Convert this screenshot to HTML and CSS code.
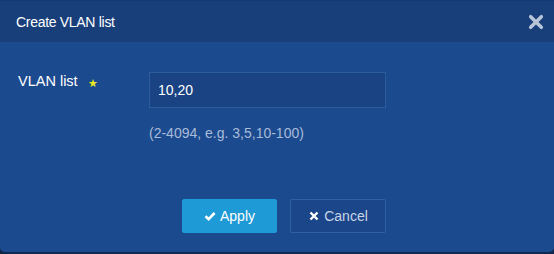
FILE: index.html
```html
<!DOCTYPE html>
<html>
  <head>
    <meta charset="utf-8">
    <title>Create VLAN list</title>
    <link rel="stylesheet" href="styles.css">
  </head>
  <body>
    <div class="modal">
      <div class="modal-header">
        <h4 class="modal-title">Create VLAN list</h4>
        <span class="close" title="Close">
          <svg viewBox="0 0 12 12">
            <path d="M2,2 L10,10 M10,2 L2,10" />
          </svg>
        </span>
      </div>

      <div class="modal-body">
        <div class="field">
          <label class="field-label">VLAN list <span class="required">&#9733;</span></label>
          <div class="field-control">
            <input class="input" type="text" value="10,20">
            <p class="hint">(2-4094, e.g. 3,5,10-100)</p>
          </div>
        </div>
      </div>

      <div class="modal-footer">
        <button class="btn btn--primary">
          <svg class="btn-icon" viewBox="0 0 12 12">
            <path d="M1.5,6.2 L4.6,9.2 L10.6,3" />
          </svg>
          Apply
        </button>
        <button class="btn btn--default">
          <svg class="btn-icon btn-icon--x" viewBox="0 0 12 12">
            <path d="M2.5,2.5 L9.5,9.5 M9.5,2.5 L2.5,9.5" />
          </svg>
          Cancel
        </button>
      </div>
    </div>
  </body>
</html>
```

FILE: styles.css
```css
body {
  margin: 0;
  font-family: 'Liberation Sans', Arial, sans-serif;
  color: #fff;
  background: #0f2547;
}
.modal {
  width: 554px;
  height: 254px;
  box-sizing: border-box;
  display: flex;
  flex-direction: column;
  background-color: #1c4a8e;
  border-bottom: 2px solid #0f2a52;
  border-radius: 0 0 6px 6px;
  overflow: hidden;
}
.modal-header {
  height: 42px;
  display: flex;
  align-items: center;
  justify-content: space-between;
  padding: 0 10px 0 16px;
  background-color: #193f7b;
  border-top: 1px solid #163870;
  box-sizing: border-box;
}
.modal-title {
  margin: 0;
  font-size: 14px;
  font-weight: normal;
  letter-spacing: -0.3px;
}
.close {
  display: block;
  width: 16px;
  height: 16px;
}
.close svg {
  display: block;
  width: 100%;
  height: 100%;
}
.close path {
  stroke: #b9c6da;
  stroke-width: 2.6px;
  stroke-linecap: round;
  fill: none;
}
.modal-body {
  padding: 30px 18px 0;
}
.field {
  display: flex;
}
.field-label {
  width: 131px;
  padding-top: 1px;
  font-size: 14.5px;
}
.required {
  color: #e6e623;
  font-size: 11px;
  margin-left: 6px;
  position: relative;
  top: 1px;
}
.field-control {
  display: flex;
  flex-direction: column;
}
.input {
  width: 237px;
  height: 36px;
  box-sizing: border-box;
  padding: 0 8px;
  background-color: #1a4384;
  border: 1px solid #2d5c9c;
  color: #fff;
  font-family: inherit;
  font-size: 14px;
  outline: none;
}
.hint {
  margin: 17px 0 0;
  font-size: 14px;
  color: #a8bbd8;
}
.modal-footer {
  display: flex;
  gap: 13px;
  margin-top: auto;
  padding: 0 0 19px 182px;
}
.btn {
  height: 34px;
  display: flex;
  align-items: center;
  justify-content: center;
  gap: 4px;
  box-sizing: border-box;
  font-family: inherit;
  font-size: 14px;
  border-radius: 2px;
  cursor: pointer;
}
.btn-icon {
  width: 12px;
  height: 12px;
}
.btn-icon path {
  stroke: #fff;
  stroke-width: 2.6px;
  fill: none;
}
.btn-icon--x path { stroke-width: 2.4px; }
.btn--primary {
  width: 95px;
  background-color: #1e9ad6;
  border: 1px solid #1e9ad6;
  color: #fff;
}
.btn--default {
  width: 96px;
  background-color: #1b4689;
  border: 1px solid #30609f;
  color: #c9d5e8;
}
```
